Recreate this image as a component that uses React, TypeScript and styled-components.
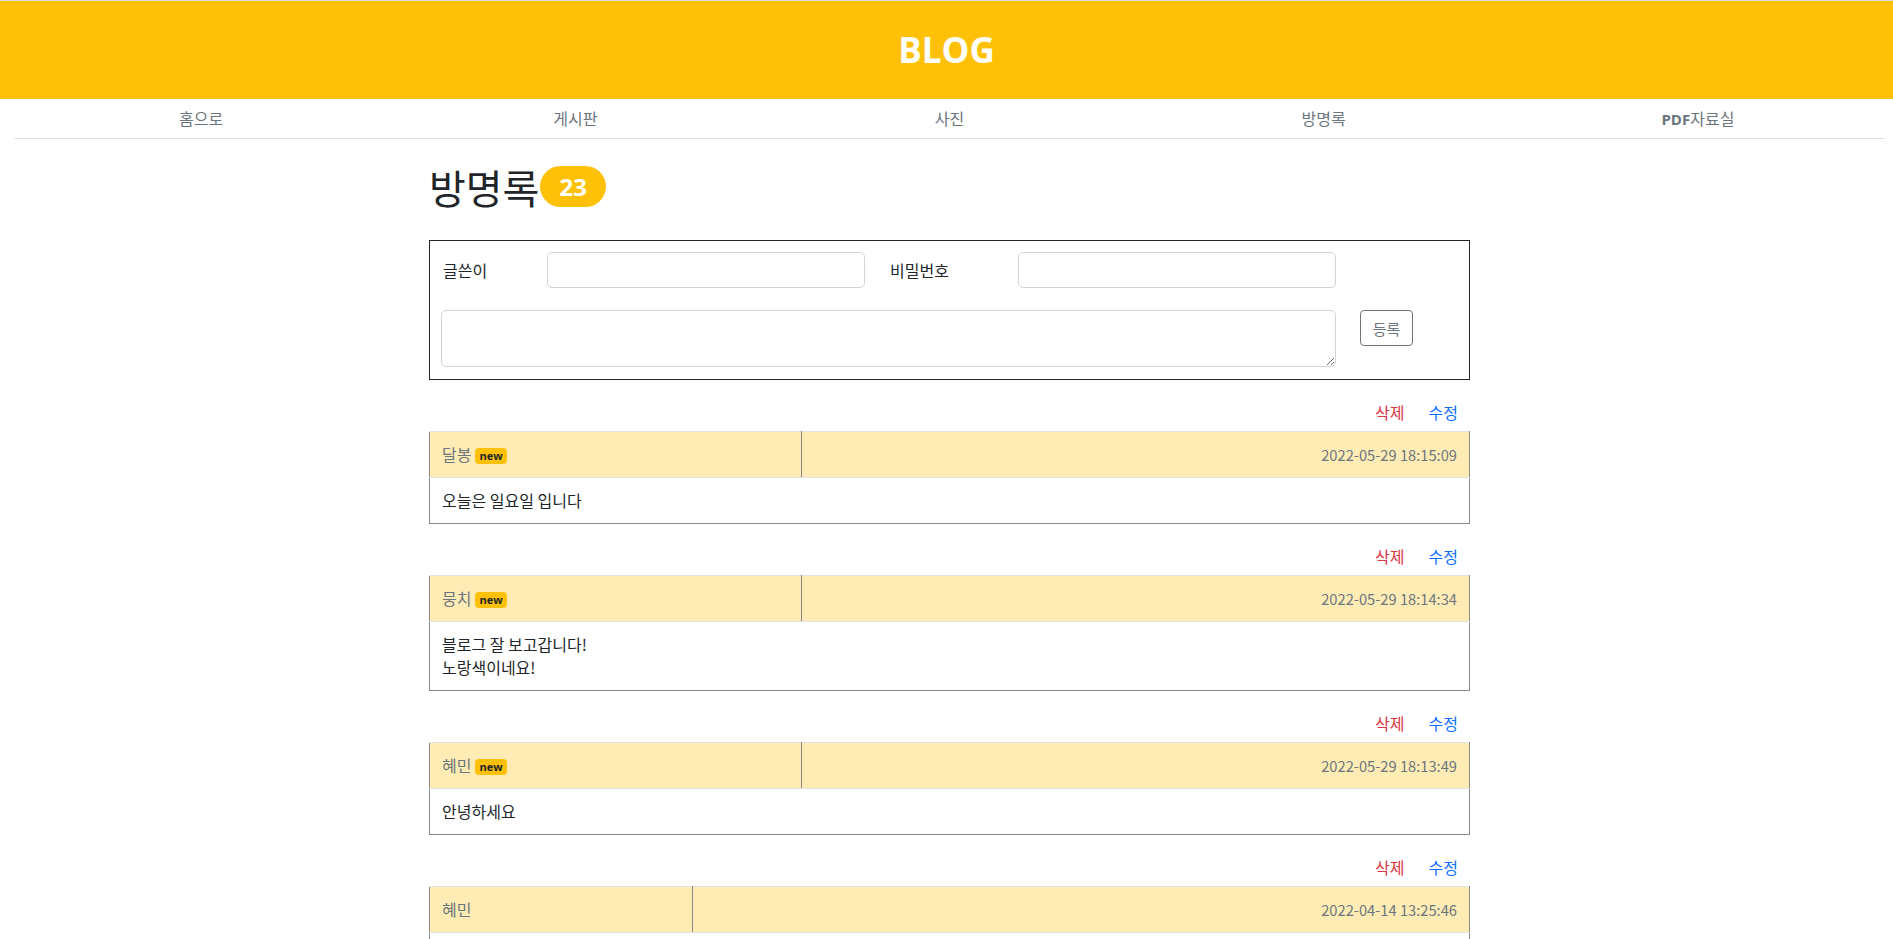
import React from "react";
import styled, { createGlobalStyle } from "styled-components";

const GlobalStyle = createGlobalStyle`
  * { box-sizing: border-box; }
  body {
    margin: 0;
    background: #fff;
    color: #212529;
    font-family: "Noto Sans CJK KR", "Open Sans", sans-serif;
    font-size: 16px;
    line-height: 1.5;
  }
`;

const Header = styled.header`
  height: 99px;
  border-top: 1px solid #dcdcdc;
  background-color: #ffc107;
  display: flex;
  align-items: center;
  justify-content: center;
`;

const Logo = styled.h1`
  margin: 0;
  color: #fff;
  font-family: "Open Sans", sans-serif;
  font-size: 35px;
  font-weight: 700;
  line-height: 1.2;
`;

const Nav = styled.nav`
  display: grid;
  grid-template-columns: repeat(5, 1fr);
  margin: 0 8px 0 14px;
  border-bottom: 1px solid #dee2e6;
`;

const NavLink = styled.a`
  padding: 7px 0;
  text-align: center;
  line-height: 24px;
  color: #6c757d;
  text-decoration: none;
`;

const NavBold = styled.b`
  font-family: "Open Sans", sans-serif;
  font-size: 15px;
  font-weight: 700;
`;

const Main = styled.main`
  margin: 0 8px 0 14px;
`;

const Content = styled.div`
  width: 1041px;
  margin: 0 auto;
  padding-bottom: 40px;
`;

const TitleRow = styled.h2`
  display: flex;
  align-items: center;
  height: 43px;
  margin: 26px 0 32px;
  font-size: 40px;
  font-weight: 400;
`;

const CountBadge = styled.span`
  margin-left: 1px;
  height: 41px;
  padding: 0 19px;
  display: inline-flex;
  align-items: center;
  border-radius: 21px;
  background: #ffc107;
  color: #fff;
  font-family: "Open Sans", sans-serif;
  font-size: 24px;
  font-weight: 700;
`;

const FormBox = styled.form`
  border: 1px solid #212529;
  padding: 11px 0 12px 11px;
  display: grid;
  grid-template-columns: 106px 318px 23px 130px 318px 24px auto;
  grid-template-rows: 36px 57px;
  row-gap: 22px;
  align-items: center;
`;

const Label = styled.label<{ $col: number }>`
  grid-column: ${(p) => p.$col};
  padding-left: 2px;
`;

const TextInput = styled.input<{ $col: number }>`
  grid-column: ${(p) => p.$col};
  height: 36px;
  border: 1px solid #ced4da;
  border-radius: 5px;
  font: inherit;
  padding: 0 10px;
`;

const Message = styled.textarea`
  grid-column: 1 / 6;
  height: 57px;
  border: 1px solid #ced4da;
  border-radius: 5px;
  font: inherit;
  padding: 6px 10px;
`;

const SubmitButton = styled.button`
  grid-column: 7;
  align-self: start;
  justify-self: start;
  width: 53px;
  height: 36px;
  padding: 0;
  border: 1px solid #6c757d;
  border-radius: 4px;
  background: #fff;
  color: #6c757d;
  font-family: "Noto Sans CJK KR", sans-serif;
  font-size: 15px;
`;

const Entry = styled.section`
  margin-top: 21px;
`;

const Actions = styled.div`
  display: flex;
  justify-content: flex-end;
  height: 23px;
  margin-bottom: 7px;
  line-height: 23px;
`;

const ActionLink = styled.a<{ $tone: "danger" | "primary" }>`
  padding: 0 12px;
  color: ${(p) => (p.$tone === "danger" ? "#dc3545" : "#0d6efd")};
  text-decoration: none;
  cursor: pointer;
`;

const Table = styled.table`
  width: 100%;
  border-collapse: collapse;
  line-height: 23px;
`;

const HeadCell = styled.th<{ $align: "left" | "right"; $first?: boolean }>`
  padding: 11px 12px;
  background: #ffecb5;
  text-align: ${(p) => p.$align};
  font-weight: 400;
  color: #6c757d;
  border-top: 1px solid #dee2e6;
  border-bottom: 1px solid #dee2e6;
  border-right: 1px solid #888;
  border-left: ${(p) => (p.$first ? "1px solid #888" : "none")};
  white-space: nowrap;
`;

const DateText = styled.span`
  font-size: 14.7px;
`;

const BodyCell = styled.td`
  padding: 11px 12px;
  border-left: 1px solid #888;
  border-right: 1px solid #888;
  border-bottom: 1px solid #888;
  white-space: pre-line;
`;

const NewBadge = styled.span`
  display: inline-block;
  margin-left: 4px;
  padding: 0 4px;
  border-radius: 4px;
  background: #ffc107;
  color: #212529;
  font-family: "Open Sans", sans-serif;
  font-size: 11px;
  font-weight: 700;
  line-height: 16px;
  vertical-align: 1px;
`;

type Post = { name: string; isNew: boolean; date: string; body: string };

const posts: Post[] = [
  { name: "달봉", isNew: true, date: "2022-05-29 18:15:09", body: "오늘은 일요일 입니다" },
  { name: "뭉치", isNew: true, date: "2022-05-29 18:14:34", body: "블로그 잘 보고갑니다!\n노랑색이네요!" },
  { name: "혜민", isNew: true, date: "2022-05-29 18:13:49", body: "안녕하세요" },
  { name: "혜민", isNew: false, date: "2022-04-14 13:25:46", body: "반갑습니다" },
  { name: "달봉", isNew: false, date: "2022-04-10 09:12:30", body: "좋은 하루 되세요" },
];

function GuestEntry({ post }: { post: Post }) {
  return (
    <Entry>
      <Actions>
        <ActionLink $tone="danger">삭제</ActionLink>
        <ActionLink $tone="primary">수정</ActionLink>
      </Actions>
      <Table>
        <thead>
          <tr>
            <HeadCell $align="left" $first>
              {post.name}
              {post.isNew && <NewBadge>new</NewBadge>}
            </HeadCell>
            <HeadCell $align="right">
              <DateText>{post.date}</DateText>
            </HeadCell>
          </tr>
        </thead>
        <tbody>
          <tr>
            <BodyCell colSpan={2}>{post.body}</BodyCell>
          </tr>
        </tbody>
      </Table>
    </Entry>
  );
}

export default function App() {
  return (
    <>
      <GlobalStyle />
      <Header>
        <Logo>BLOG</Logo>
      </Header>
      <Nav>
        <NavLink href="#">홈으로</NavLink>
        <NavLink href="#">게시판</NavLink>
        <NavLink href="#">사진</NavLink>
        <NavLink href="#">방명록</NavLink>
        <NavLink href="#">
          <NavBold>PDF</NavBold>자료실
        </NavLink>
      </Nav>
      <Main>
        <Content>
          <TitleRow>
            방명록<CountBadge>23</CountBadge>
          </TitleRow>
          <FormBox onSubmit={(e) => e.preventDefault()}>
            <Label $col={1}>글쓴이</Label>
            <TextInput $col={2} />
            <Label $col={4}>비밀번호</Label>
            <TextInput $col={5} type="password" />
            <Message />
            <SubmitButton type="submit">등록</SubmitButton>
          </FormBox>
          {posts.map((p, i) => (
            <GuestEntry key={i} post={p} />
          ))}
        </Content>
      </Main>
    </>
  );
}
